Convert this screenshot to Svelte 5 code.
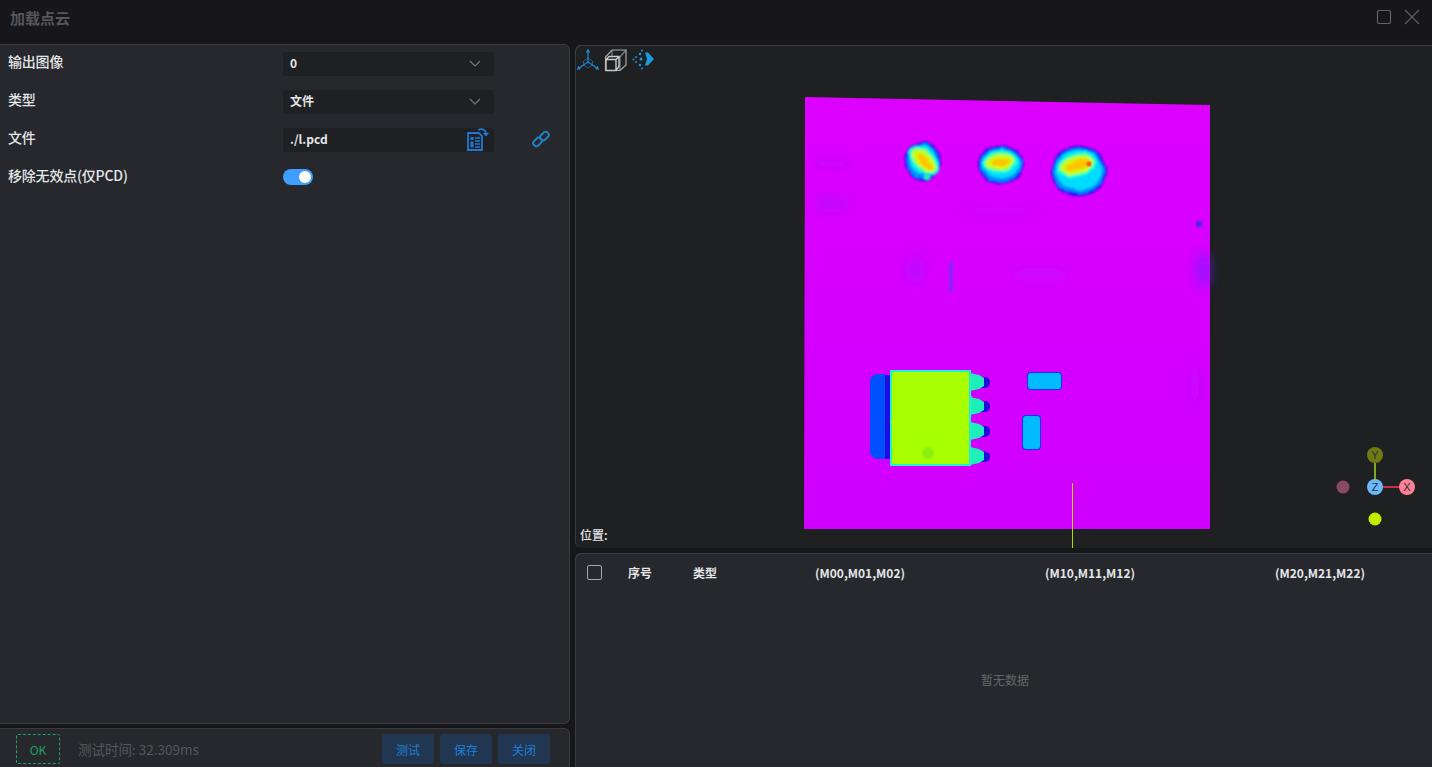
<script>
	const fields = [
		{ label: '输出图像', value: '0', kind: 'select' },
		{ label: '类型', value: '文件', kind: 'select' },
		{ label: '文件', value: './l.pcd', kind: 'file' }
	];
	const columns = [
		{ name: '序号', width: 65 },
		{ name: '类型', width: 75 },
		{ name: '(M00,M01,M02)', width: 230, center: true },
		{ name: '(M10,M11,M12)', width: 230, center: true },
		{ name: '(M20,M21,M22)', width: 230, center: true }
	];
	const buttons = ['测试', '保存', '关闭'];
	const pins = [382, 406, 431, 456];
	const bumps = [
		{ cx: 923, cy: 161, rx: 18, ry: 19, hx: 924, hy: 161, hrx: 14, hry: 7, rot: 45 },
		{ cx: 1001, cy: 165, rx: 23, ry: 19, hx: 1000, hy: 162, hrx: 13, hry: 7, rot: -8 },
		{ cx: 1079, cy: 171, rx: 28, ry: 25, hx: 1077, hy: 165, hrx: 16, hry: 8, rot: -15 }
	];
</script>

<div class="window">
	<header class="titlebar">
		<span class="title">加载点云</span>
		<div class="winbtns">
			<svg width="16" height="16" viewBox="0 0 16 16"><rect x="1.500" y="1.500" width="13" height="13" rx="1.500" fill="none" stroke="#5f6064" stroke-width="1.200" /></svg>
			<svg width="16" height="16" viewBox="0 0 16 16"><path d="M1 1l14 14M15 1L1 15" fill="none" stroke="#5f6064" stroke-width="1.200" /></svg>
		</div>
	</header>

	<main class="body">
		<section class="left">
			<div class="panel form">
				{#each fields as f}
					<div class="row">
						<span class="label">{f.label}</span>
						<div class="control">
							<span class="value">{f.value}</span>
							{#if f.kind === 'select'}
								<svg class="chev" width="12" height="7" viewBox="0 0 12 7"><path d="M1 1l5 5 5-5" fill="none" stroke="#77797e" stroke-width="1.100" /></svg>
							{:else}
								<svg class="fileicon" width="22" height="23" viewBox="0 0 22 23">
									<path d="M1 5h11l3 3v14H1z" fill="none" stroke="#1f78d1" stroke-width="1.800" />
									<path d="M3.500 9h3v3h-3zM3.500 13.500h3v6h-3z" fill="#1f78d1" />
									<path d="M8 10h5M8 13h5M8 16h5M8 19h5" stroke="#1f78d1" stroke-width="1.400" />
									<path d="M11 2c3.500-1.500 7-1 8 3" fill="none" stroke="#1f78d1" stroke-width="1.800" />
									<path d="M16 5h6l-3 3.500z" fill="#1f78d1" />
								</svg>
							{/if}
						</div>
						{#if f.kind === 'file'}
							<svg class="link" width="18" height="18" viewBox="0 0 18 18">
								<g fill="none" stroke="#1d82c6" stroke-width="1.900">
									<rect x="9.500" y="1.500" width="6" height="9" rx="2.200" transform="rotate(45 12.500 6)" />
									<rect x="2.500" y="7.500" width="6" height="9" rx="2.200" transform="rotate(45 5.500 12)" />
								</g>
							</svg>
						{/if}
					</div>
				{/each}
				<div class="row">
					<span class="label">移除无效点(仅PCD)</span>
					<span class="switch"><i></i></span>
				</div>
			</div>
			<div class="panel footer">
				<span class="ok">OK</span>
				<span class="time">测试时间: 32.309ms</span>
				<div class="actions">
					{#each buttons as b}
						<button>{b}</button>
					{/each}
				</div>
			</div>
		</section>

		<section class="right">
			<div class="viewer">
				<svg class="cloud" viewBox="575 45 857 503" width="857" height="503">
					<defs>
						<linearGradient id="plate" x1="0" y1="0" x2="0" y2="1">
							<stop offset="0" stop-color="#dc00ff" />
							<stop offset="1" stop-color="#cf00ff" />
						</linearGradient>
						<filter id="soft"><feGaussianBlur stdDeviation="0.800" /></filter>
						<filter id="wide"><feGaussianBlur stdDeviation="6" /></filter>
						<filter id="rough" x="-20%" y="-20%" width="140%" height="140%">
							<feTurbulence type="fractalNoise" baseFrequency="0.09" numOctaves="2" seed="4" />
							<feDisplacementMap in="SourceGraphic" scale="4" xChannelSelector="R" yChannelSelector="G" />
							<feGaussianBlur stdDeviation="1" />
						</filter>
						<filter id="edge" x="-10%" y="-10%" width="120%" height="120%">
							<feTurbulence type="fractalNoise" baseFrequency="0.2" numOctaves="1" seed="9" />
							<feDisplacementMap in="SourceGraphic" scale="2" xChannelSelector="R" yChannelSelector="G" />
							<feGaussianBlur stdDeviation="0.700" />
						</filter>
					</defs>
					<polygon points="805,97 1210,105 1210,529 804,529" fill="url(#plate)" />
					<g filter="url(#wide)" opacity="0.6">
						<ellipse cx="1203" cy="270" rx="7" ry="18" fill="#6a20ff" />
						<ellipse cx="915" cy="270" rx="10" ry="14" fill="#b010ff" />
						<ellipse cx="832" cy="203" rx="18" ry="6" fill="#a818ff" />
						<ellipse cx="832" cy="163" rx="22" ry="5" fill="#bc08ff" />
						<ellipse cx="1195" cy="385" rx="6" ry="22" fill="#c008ff" />
						<ellipse cx="1040" cy="275" rx="30" ry="8" fill="#c808ff" />
						<ellipse cx="1000" cy="210" rx="40" ry="5" fill="#c808ff" />
					</g>
					<rect x="949" y="262" width="4" height="30" fill="#6a30ff" opacity="0.7" filter="url(#soft)" />
					<circle cx="1199" cy="224" r="3" fill="#2a30e0" filter="url(#soft)" />

					{#each bumps as b}
						<g filter="url(#rough)">
							<ellipse cx={b.cx} cy={b.cy} rx={b.rx} ry={b.ry} fill="#1414f0" />
							<ellipse cx={b.cx} cy={b.cy} rx={b.rx - 2} ry={b.ry - 2} fill="#0090ff" />
							<ellipse cx={b.cx} cy={b.cy - 1} rx={b.rx - 5} ry={b.ry - 5} fill="#00dcff" />
							<ellipse cx={b.hx} cy={b.hy} rx={b.hrx + 4} ry={b.hry + 4} fill="#20ffc8" transform="rotate({b.rot} {b.hx} {b.hy})" />
							<ellipse cx={b.hx} cy={b.hy} rx={b.hrx + 1} ry={b.hry + 1} fill="#c8ff10" transform="rotate({b.rot} {b.hx} {b.hy})" />
							<ellipse cx={b.hx + 1} cy={b.hy} rx={b.hrx - 3} ry={b.hry - 3} fill="#ffc400" transform="rotate({b.rot} {b.hx} {b.hy})" />
						</g>
					{/each}
					<circle cx="927" cy="177" r="3.500" fill="#20e8c0" filter="url(#soft)" />
					<circle cx="1089" cy="164" r="2.500" fill="#f04020" filter="url(#soft)" />

					<g filter="url(#edge)">
						<rect x="870" y="374" width="20" height="85" rx="8" fill="#0050ff" />
						<rect x="885" y="375" width="8" height="84" fill="#1a10e0" />
						{#each pins as y}
							<rect x="975" y={y - 5} width="15" height="11" rx="5" fill="#2410d8" />
							<path d="M970 {y - 9}l9 2 5 3v8l-5 3-9 2z" fill="#1ef0b8" />
						{/each}
						<rect x="890" y="370" width="81" height="96" fill="#20f0d0" />
						<rect x="892" y="372" width="77" height="92" fill="#a8ff00" />
					</g>
					<circle cx="928" cy="453" r="6" fill="#88f010" filter="url(#soft)" />
					<g filter="url(#edge)">
						<rect x="1027" y="372" width="35" height="18" rx="4" fill="#1a30f0" />
						<rect x="1028" y="373" width="33" height="16" rx="3" fill="#00bcff" />
						<rect x="1022" y="415" width="19" height="35" rx="4" fill="#1a30f0" />
						<rect x="1023" y="416" width="17" height="33" rx="3" fill="#00bcff" />
					</g>
					<line x1="1072.500" y1="483" x2="1072.500" y2="548" stroke="#a4e000" stroke-width="1" />

					<g class="gizmo">
						<line x1="1375" y1="487" x2="1375" y2="455" stroke="#7fa91e" stroke-width="2" />
						<line x1="1375" y1="487" x2="1407" y2="487" stroke="#c4304c" stroke-width="2" />
						<circle cx="1375" cy="455" r="8" fill="#6f7a12" />
						<circle cx="1343" cy="487" r="6.500" fill="#8b4a60" />
						<circle cx="1375" cy="519" r="6.500" fill="#c4ea00" />
						<circle cx="1407" cy="487" r="8" fill="#ff7f96" />
						<circle cx="1375" cy="487" r="8" fill="#6ab8fa" />
						<text x="1375" y="459">Y</text>
						<text x="1407" y="491">X</text>
						<text x="1375" y="491">Z</text>
					</g>
				</svg>

				<div class="tools">
					<svg width="24" height="24" viewBox="0 0 24 24">
						<g fill="none" stroke="#1f86cf" stroke-width="1.300">
							<path d="M12 3v11M12 14l-9 6M12 14l9 6" />
							<path d="M12 10l-4.500 3v4l4.500 3 4.500-3v-4z" stroke-width="1" opacity="0.6" />
						</g>
						<path d="M12 0.500l2.200 4h-4.400zM1 22l1.200-4.200 2.800 3.300zM23 22l-4-0.900 2.800-3.300z" fill="#1f86cf" />
					</svg>
					<svg width="24" height="24" viewBox="0 0 24 24">
						<g fill="none" stroke="#a6a8aa" stroke-width="1.200">
							<path d="M1.500 9L8 2h14v15l-6 5.500H1.500z" />
							<path d="M8 2l0 6M22 2l-6 7v13.500" opacity="0.7" />
						</g>
						<g fill="none" stroke="#c8cacc" stroke-width="1.400">
							<path d="M2 11.500h10v11H2zM2 11.500l3-3h10v10l-3 4M12 11.500l3-3" />
						</g>
					</svg>
					<svg width="24" height="22" viewBox="0 0 24 22" fill="#1b9ae0">
						<path d="M13 3.500h3l6 6.500-6 6.500h-3l2-6.500z" />
						<circle cx="8" cy="5" r="1.200" /><circle cx="10" cy="1.500" r="1" /><circle cx="9" cy="10" r="1.500" />
						<circle cx="4" cy="8" r="0.900" /><circle cx="1.500" cy="10.500" r="0.900" /><circle cx="4" cy="13" r="0.900" />
						<circle cx="8" cy="16" r="1.200" /><circle cx="10" cy="19.500" r="1" />
					</svg>
				</div>
				<span class="pos">位置:</span>
			</div>

			<div class="table">
				<div class="thead">
					<span class="check"></span>
					{#each columns as c}
						<span class="th" class:center={c.center} style="width:{c.width}px">{c.name}</span>
					{/each}
				</div>
				<div class="empty">暂无数据</div>
			</div>
		</section>
	</main>
</div>

<style>
	:global(body) {
		background: #16161b;
		overflow: hidden;
	}
	.window {
		width: 1432px;
		height: 767px;
		display: flex;
		flex-direction: column;
		overflow: hidden;
		font-family: 'Noto Sans CJK SC', 'Noto Sans', sans-serif;
		font-size: 14px;
		color: #e4e5e7;
		background: #16161b;
	}
	.titlebar {
		flex: 0 0 44px;
		display: flex;
		justify-content: space-between;
		padding: 0 12px 10px 10px;
		align-items: center;
		box-sizing: border-box;
	}
	.title {
		color: #55565a;
		font-size: 15px;
		font-weight: 700;
	}
	.winbtns {
		display: flex;
		gap: 12px;
	}
	.body {
		flex: 1;
		display: flex;
		gap: 5px;
		min-height: 0;
	}
	.left {
		width: 570px;
		display: flex;
		flex-direction: column;
		gap: 4px;
	}
	.panel {
		background: #26282d;
		border: 1px solid #3a3b3f;
		border-left: 0;
		border-radius: 0 6px 6px 0;
		box-sizing: border-box;
	}
	.form {
		flex: 0 0 680px;
		padding: 0 8px;
	}
	.row {
		display: flex;
		align-items: center;
		height: 38px;
	}
	.label {
		width: 275px;
		font-weight: 500;
		letter-spacing: -0.2px;
		margin-bottom: 7px;
	}
	.control {
		width: 211px;
		height: 24px;
		margin-bottom: 1px;
		padding: 0 13px 0 7px;
		box-sizing: border-box;
		background: #1f2024;
		border-radius: 3px;
		display: flex;
		align-items: center;
		justify-content: space-between;
		font-size: 12px;
		font-weight: 600;
		position: relative;
	}
	.value {
		margin-bottom: 2px;
	}
	.fileicon {
		position: absolute;
		right: 5px;
		top: 0;
	}
	.link {
		margin-left: 38px;
		margin-bottom: 3px;
	}
	.switch {
		width: 30px;
		height: 16px;
		margin-bottom: 2px;
		border-radius: 8px;
		background: #409eff;
		display: flex;
		justify-content: flex-end;
		align-items: center;
		padding: 0 2px;
		box-sizing: border-box;
	}
	.switch i {
		width: 12px;
		height: 12px;
		border-radius: 50%;
		background: #fff;
	}
	.footer {
		flex: 1;
		display: flex;
		align-items: center;
		padding: 2px 19px 0 16px;
		border-bottom: 0;
		border-bottom-right-radius: 0;
	}
	.ok {
		width: 44px;
		height: 30px;
		box-sizing: border-box;
		border: 1px dashed #21a05f;
		border-radius: 2px;
		color: #21a05f;
		font-size: 12px;
		display: flex;
		align-items: center;
		justify-content: center;
	}
	.time {
		margin-left: 18px;
		color: #55565b;
		font-size: 13.500px;
	}
	.actions {
		margin-left: auto;
		display: flex;
		gap: 6px;
	}
	button {
		width: 52px;
		height: 30px;
		border: 0;
		border-radius: 3px;
		background: #213650;
		color: #1d7fd8;
		font: inherit;
		font-size: 12px;
		padding: 0;
	}
	.right {
		flex: 1;
		display: flex;
		flex-direction: column;
		gap: 5px;
		min-width: 0;
		margin-top: 1px;
	}
	.viewer {
		flex: 0 0 503px;
		position: relative;
		background: #1f2022;
		border-radius: 6px 0 0 6px;
		box-shadow: inset 1px 1px 0 #3a3b3f;
		overflow: hidden;
	}
	.cloud {
		position: absolute;
		inset: 0;
	}
	.gizmo text {
		font-size: 11px;
		text-anchor: middle;
		fill: #2a3040;
		font-family: 'Liberation Sans', sans-serif;
	}
	.tools {
		position: absolute;
		left: 1px;
		top: 3px;
		display: flex;
		gap: 4px;
		align-items: center;
	}
	.pos {
		position: absolute;
		left: 5px;
		bottom: 5px;
		font-size: 12px;
		font-weight: 500;
	}
	.table {
		flex: 1;
		background: #26282d;
		border-radius: 6px 0 0 0;
		box-shadow: inset 1px 1px 0 #3a3b3f;
		display: flex;
		flex-direction: column;
	}
	.thead {
		display: flex;
		align-items: center;
		height: 38px;
		padding-left: 13px;
		font-size: 12px;
		font-weight: 700;
	}
	.check {
		width: 13px;
		height: 13px;
		border: 1px solid #a6a7aa;
		border-radius: 2px;
		margin-right: 26px;
		margin-left: -1px;
		flex: none;
	}
	.th {
		flex: none;
	}
	.th.center {
		text-align: center;
		position: relative;
		left: -23px;
	}
	.empty {
		flex: 1;
		display: flex;
		align-items: center;
		justify-content: center;
		color: #65666b;
		font-size: 12px;
		padding-left: 3px;
	}
</style>
